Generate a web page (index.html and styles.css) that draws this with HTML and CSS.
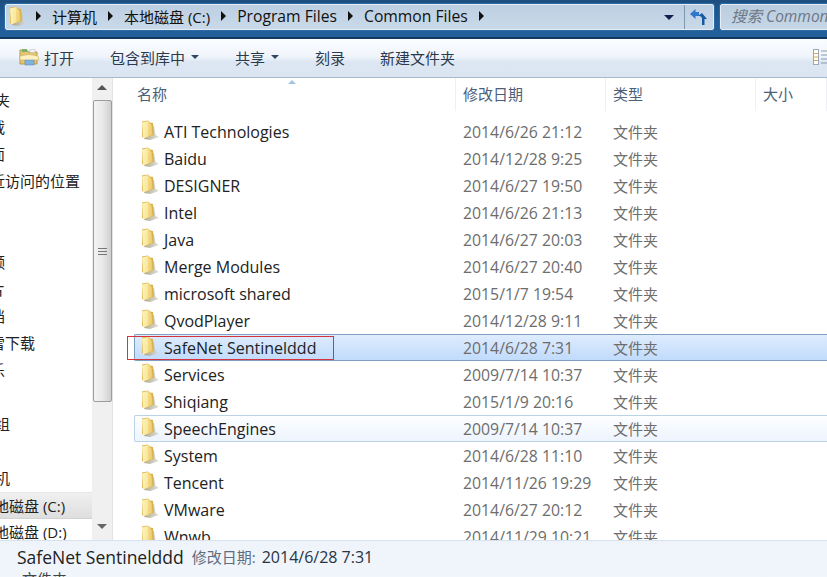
FILE: index.html
```html
<!DOCTYPE html>
<html lang="zh">
<head>
<meta charset="utf-8">
<title>Common Files</title>
<link rel="stylesheet" href="styles.css">
</head>
<body>
<svg class="defs" width="0" height="0">
  <defs>
    <linearGradient id="fg" x1="0" y1="0" x2="1" y2="0.2">
      <stop offset="0" stop-color="#fdf5c0"/><stop offset="0.6" stop-color="#f9e89c"/><stop offset="1" stop-color="#eccb6c"/>
    </linearGradient>
    <linearGradient id="sh" x1="0" y1="0" x2="1" y2="0">
      <stop offset="0" stop-color="#a39c7e"/><stop offset="1" stop-color="#dcdcd6"/>
    </linearGradient>
    <symbol id="folder" viewBox="0 0 18 20">
      <path d="M9 5 L13 6 L14.500 15 L18 17 L9 20 L3 19 Z" fill="url(#sh)" opacity=".85"/>
      <path d="M1 1.500 L7 .5 L9 2.500 L12 3 L13 15 L4 18 L1 17 Z" fill="#d9b24f"/>
      <path d="M1 2.500 L7 1 L10.500 5 L11.500 15 L2 18.500 Z" fill="url(#fg)"/>
      <path d="M7 1 L8.500 3.500 L9 16 L7.500 16.500 Z" fill="#efd078" opacity=".75"/>
    </symbol>
  </defs>
</svg>
<div class="window">
  <header class="topbar">
    <div class="address">
      <svg class="addr-icon"><use href="#folder"/></svg>
      <span class="tri"></span><span class="crumb">计算机</span>
      <span class="tri"></span><span class="crumb">本地磁盘 (C:)</span>
      <span class="tri"></span><span class="crumb latin">Program Files</span>
      <span class="tri"></span><span class="crumb latin">Common Files</span>
      <span class="tri"></span>
      <span class="grow"></span>
      <span class="drop"></span>
      <span class="refresh">
        <svg width="20" height="20" viewBox="0 0 20 20"><path d="M1 7 L6.500 2 L6.500 5 L10 5 L10 9 L6.500 9 L6.500 12 Z" fill="#2f78cc"/><path d="M10 9 C12 9 13 10 13 12 L13 18 L15.500 18 L15.500 12 L18 12 L13 6 L9 9 Z" fill="#155a9f"/></svg>
      </span>
    </div>
    <div class="search">搜索 Common Files</div>
  </header>

  <nav class="toolbar">
    <span class="tool open">
      <svg width="21" height="20" viewBox="0 0 21 20"><path d="M1 3 H8 L9 5 H18 V17 H1 Z" fill="#e5c66f" stroke="#b59a50"/><rect x="3" y="2" width="5" height="3" fill="#7fb06a"/><rect x="11" y="2.500" width="5" height="3" fill="#f3f3f3" stroke="#bbb" stroke-width=".5"/><path d="M1 9 Q10 6 19 9 L20 13 L15 13 L15 17 L6 17 L6 13 L1 13 Z" fill="#fdf1bf" stroke="#c9ad62" stroke-width=".6"/><path d="M6 13 H15 V18 H6 Z" fill="#7fb2de" stroke="#5c8fbe" stroke-width=".6"/></svg>
      打开
    </span>
    <span class="tool lib">包含到库中<span class="caret"></span></span>
    <span class="tool share">共享<span class="caret"></span></span>
    <span class="tool burn">刻录</span>
    <span class="tool newf">新建文件夹</span>
    <span class="grow"></span>
    <svg class="view" width="15" height="18" viewBox="0 0 15 18"><rect x=".5" y="1.500" width="5" height="15" fill="#fff" stroke="#9aa7b6"/><path d="M1 5.500 H5 M1 9 H5 M1 12.500 H5" stroke="#e0a94a"/><path d="M8 3 H15 M8 7 H15 M8 11 H15 M8 15 H15" stroke="#8b97a6"/></svg>
  </nav>

  <main class="body">
    <aside class="side">
      <ul class="tree">
        <li class="n0">收藏夹</li>
        <li class="n1">下载</li>
        <li class="n1">桌面</li>
        <li class="n1">最近访问的位置</li>
        <li></li>
        <li></li>
        <li class="n1">视频</li>
        <li class="n1">图片</li>
        <li class="n1">文档</li>
        <li class="n1">迅雷下载</li>
        <li class="n1">音乐</li>
        <li></li>
        <li class="n0">家庭组</li>
        <li></li>
        <li class="n0">计算机</li>
        <li class="n3 cur">本地磁盘 (C:)</li>
        <li class="n3">本地磁盘 (D:)</li>
      </ul>
    </aside>
    <div class="vscroll">
      <span class="arrow up"></span>
      <div class="thumb"><span class="grip"></span></div>
      <span class="grow"></span>
      <span class="arrow down"></span>
    </div>
    <section class="files">
      <div class="heads">
        <span class="sort"></span>
        <span class="h hname">名称</span>
        <span class="h">修改日期</span>
        <span class="h">类型</span>
        <span class="h">大小</span>
      </div>
      <div class="rows">
        <div class="row"><span class="name"><svg class="ficon"><use href="#folder"/></svg>ATI Technologies</span><span class="cell date">2014/6/26 21:12</span><span class="cell">文件夹</span></div>
        <div class="row"><span class="name"><svg class="ficon"><use href="#folder"/></svg>Baidu</span><span class="cell date">2014/12/28 9:25</span><span class="cell">文件夹</span></div>
        <div class="row"><span class="name"><svg class="ficon"><use href="#folder"/></svg>DESIGNER</span><span class="cell date">2014/6/27 19:50</span><span class="cell">文件夹</span></div>
        <div class="row"><span class="name"><svg class="ficon"><use href="#folder"/></svg>Intel</span><span class="cell date">2014/6/26 21:13</span><span class="cell">文件夹</span></div>
        <div class="row"><span class="name"><svg class="ficon"><use href="#folder"/></svg>Java</span><span class="cell date">2014/6/27 20:03</span><span class="cell">文件夹</span></div>
        <div class="row"><span class="name"><svg class="ficon"><use href="#folder"/></svg>Merge Modules</span><span class="cell date">2014/6/27 20:40</span><span class="cell">文件夹</span></div>
        <div class="row"><span class="name"><svg class="ficon"><use href="#folder"/></svg>microsoft shared</span><span class="cell date">2015/1/7 19:54</span><span class="cell">文件夹</span></div>
        <div class="row"><span class="name"><svg class="ficon"><use href="#folder"/></svg>QvodPlayer</span><span class="cell date">2014/12/28 9:11</span><span class="cell">文件夹</span></div>
        <div class="row selected"><span class="name"><svg class="ficon"><use href="#folder"/></svg>SafeNet Sentinelddd</span><span class="cell date">2014/6/28 7:31</span><span class="cell">文件夹</span><span class="redbox"></span></div>
        <div class="row"><span class="name"><svg class="ficon"><use href="#folder"/></svg>Services</span><span class="cell date">2009/7/14 10:37</span><span class="cell">文件夹</span></div>
        <div class="row"><span class="name"><svg class="ficon"><use href="#folder"/></svg>Shiqiang</span><span class="cell date">2015/1/9 20:16</span><span class="cell">文件夹</span></div>
        <div class="row hot"><span class="name"><svg class="ficon"><use href="#folder"/></svg>SpeechEngines</span><span class="cell date">2009/7/14 10:37</span><span class="cell">文件夹</span></div>
        <div class="row"><span class="name"><svg class="ficon"><use href="#folder"/></svg>System</span><span class="cell date">2014/6/28 11:10</span><span class="cell">文件夹</span></div>
        <div class="row"><span class="name"><svg class="ficon"><use href="#folder"/></svg>Tencent</span><span class="cell date">2014/11/26 19:29</span><span class="cell">文件夹</span></div>
        <div class="row"><span class="name"><svg class="ficon"><use href="#folder"/></svg>VMware</span><span class="cell date">2014/6/27 20:12</span><span class="cell">文件夹</span></div>
        <div class="row"><span class="name"><svg class="ficon"><use href="#folder"/></svg>Wnwb</span><span class="cell date">2014/11/29 10:21</span><span class="cell">文件夹</span></div>
      </div>
    </section>
  </main>

  <footer class="status">
    <div class="s1"><span class="sname">SafeNet Sentinelddd</span><span class="slabel">修改日期:</span><span class="sval">2014/6/28 7:31</span></div>
    <div class="s2">文件夹</div>
  </footer>
</div>
</body>
</html>
```

FILE: styles.css
```css
* { box-sizing: border-box; }
html, body { margin: 0; height: 100%; overflow: hidden; }
body {
  font-family: "Open Sans", "Noto Sans CJK SC", sans-serif;
  font-size: 15px;
  color: #333;
  background: #fff;
}
.defs { position: absolute; }
.grow { flex: 1; }
.window { width: 827px; height: 577px; display: flex; flex-direction: column; overflow: hidden; }

.topbar {
  height: 39px;
  flex: none;
  display: flex;
  gap: 6px;
  padding: 4px 0 8px 5px;
  background: linear-gradient(#1d4f80, #1f5c97 55%, #235f9a);
  border-bottom: 2px solid #123a5e;
}
.address {
  width: 709px;
  height: 26px;
  display: flex;
  align-items: center;
  background: linear-gradient(#bccfe2, #c9d9e9);
  border: 1px solid #e4edf5;
  border-radius: 2px;
  box-shadow: 0 0 0 1px #2d6aa2;
  color: #111;
  font-size: 15px;
  padding: 0 0 2px 3px;
}
.addr-icon { width: 18px; height: 20px; margin: 0 9px 0 0; }
.tri {
  width: 0; height: 0;
  border-left: 5px solid #111;
  border-top: 5px solid transparent;
  border-bottom: 5px solid transparent;
  margin-right: 11px;
}
.crumb { margin-right: 11px; white-space: nowrap; }
.latin { font-size: 15.700px; }
.drop {
  width: 0; height: 0;
  border-top: 5px solid #10204a;
  border-left: 5px solid transparent;
  border-right: 5px solid transparent;
  margin: 2px 10px 0 0;
}
.refresh {
  width: 29px;
  height: 24px;
  margin-bottom: -2px;
  border-left: 1px solid #7e97ad;
  display: flex;
  align-items: center;
  justify-content: center;
}
.search {
  flex: 1;
  height: 26px;
  margin-right: -4px;
  padding-left: 10px;
  background: linear-gradient(#bacde0, #c6d6e6);
  border: 1px solid #e4edf5;
  border-radius: 2px;
  box-shadow: 0 0 0 1px #2d6aa2;
  color: #6d7785;
  font-style: italic;
  font-size: 15.500px;
  line-height: 23px;
  white-space: nowrap;
  overflow: hidden;
}

.toolbar {
  height: 39px;
  flex: none;
  display: flex;
  align-items: center;
  padding-bottom: 2px;
  background: linear-gradient(#fbfdff, #f0f5fb 45%, #dde7f4 60%, #dbe5f2);
  border-bottom: 1px solid #a9b9cc;
  color: #2b3a4d;
  font-size: 15px;
}
.tool { display: flex; align-items: center; white-space: nowrap; }
.open { margin-left: 19px; gap: 4px; width: 91px; }
.lib { width: 125px; }
.share { width: 80px; }
.burn { width: 65px; }
.caret {
  width: 0; height: 0;
  margin-left: 6px;
  border-top: 4px solid #34465e;
  border-left: 4px solid transparent;
  border-right: 4px solid transparent;
}
.view { margin-right: -1px; }

.body { flex: 1; min-height: 0; display: flex; }
.side { width: 92px; flex: none; overflow: hidden; }
.tree { list-style: none; margin: 9px 0 0; padding: 0; }
.tree li { height: 27px; line-height: 27px; white-space: nowrap; color: #222; }
.n0 { text-indent: -35px; }
.n1 { text-indent: -25px; }
.n3 { text-indent: -21px; }
.tree .cur { background: linear-gradient(#f0f0f0, #dedede); border-top: 1px solid #e6e6e6; border-bottom: 1px solid #d2d2d2; }

.vscroll {
  width: 21px;
  flex: none;
  display: flex;
  flex-direction: column;
  align-items: center;
  background: #f0f0f0;
  border-right: 1px solid #e3e3e3;
  padding: 7px 0;
}
.arrow { width: 0; height: 0; border-left: 5px solid transparent; border-right: 5px solid transparent; flex: none; }
.up { border-bottom: 5px solid #555; }
.down { border-top: 5px solid #666; margin-bottom: 4px; }
.thumb {
  width: 19px;
  height: 302px;
  margin-top: 10px;
  flex: none;
  border: 1px solid #9c9c9c;
  border-radius: 2px;
  background: linear-gradient(90deg, #f4f4f4, #e9e9e9 50%, #cfcfcf);
  display: flex;
  align-items: center;
  justify-content: center;
}
.grip { width: 9px; height: 7px; border-top: 1px solid #777; border-bottom: 1px solid #777; background: linear-gradient(transparent 2px, #777 2px, #777 3px, transparent 3px); }

.files { flex: 1; min-width: 0; position: relative; overflow: hidden; }
.heads {
  height: 40px;
  display: grid;
  grid-template-columns: 343px 150px 150px 1fr;
  color: #4c607a;
  font-size: 15px;
}
.h {
  height: 33px;
  padding-left: 7px;
  line-height: 33px;
  border-right: 1px solid #eef0f3;
}
.hname { padding-left: 24px; }
.sort {
  position: absolute;
  left: 175px;
  top: 2px;
  width: 0; height: 0;
  border-left: 4px solid transparent;
  border-right: 4px solid transparent;
  border-bottom: 4px solid #a3c6e0;
}
.row {
  position: relative;
  height: 27px;
  margin-left: 21px;
  display: grid;
  grid-template-columns: 321px 150px 150px;
  align-items: center;
  border: 1px solid transparent;
  border-right: none;
  border-radius: 2px 0 0 2px;
  color: #6d6d6d;
}
.name {
  display: flex;
  align-items: center;
  padding-left: 6px;
  color: #222;
  font-size: 16px;
  white-space: nowrap;
}
.ficon { width: 18px; height: 20px; margin: -3px 5px 0 0; flex: none; }
.cell { padding-left: 7px; white-space: nowrap; }
.date { font-size: 15.800px; }
.selected {
  background: linear-gradient(#dfecfd, #c0dbfc);
  border-color: #7f9fc0;
}
.hot {
  background: linear-gradient(#fdfeff, #edf4fe);
  border-color: #bcd3e6;
}
.redbox {
  position: absolute;
  left: -8px;
  top: 1px;
  width: 207px;
  height: 24px;
  border: 1px solid #d6333f;
}

.status {
  height: 37px;
  flex: none;
  padding: 4px 17px 0;
  background: linear-gradient(#eff3fa, #f1f5fc);
  border-top: 1px solid #d6e2f0;
  overflow: hidden;
  white-space: nowrap;
}
.s1 { height: 24px; line-height: 24px; display: flex; align-items: center; }
.sname { font-size: 17.500px; color: #222; margin-right: 8px; }
.slabel { font-size: 15px; color: #5f6d7f; margin-right: 6px; }
.sval { font-size: 16px; color: #2a3342; }
.s2 { font-size: 15px; line-height: 20px; color: #444; margin-left: 5px; }
```
